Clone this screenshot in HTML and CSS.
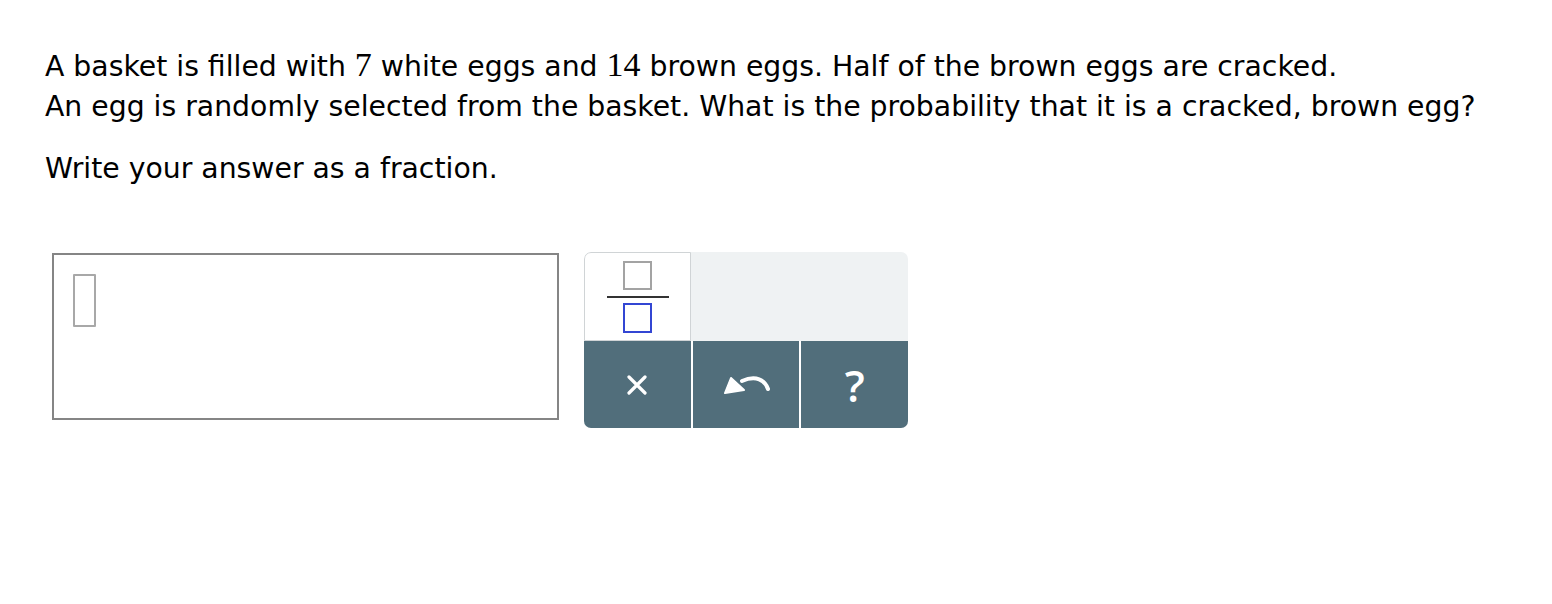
FILE: index.html
```html
<!DOCTYPE html>
<html lang="en">
<head>
<meta charset="utf-8">
<title>Probability question</title>
<link rel="stylesheet" href="styles.css">
</head>
<body>
<main class="page">
  <p class="question">A basket is filled with <span class="num">7</span> white eggs and <span class="num">14</span> brown eggs. Half of the brown eggs are cracked.<br>An egg is randomly selected from the basket. What is the probability that it is a cracked, brown egg?</p>
  <p class="instruction">Write your answer as a fraction.</p>
  <div class="answer-row">
    <div class="answer-box"><span class="cursor"></span></div>
    <div class="keypad">
      <div class="keys-top">
        <button class="key key-frac" aria-label="fraction">
          <svg width="64" height="74" viewBox="0 0 64 74">
            <rect x="18" y="2" width="27" height="27" fill="none" stroke="#a3a3a3" stroke-width="2"/>
            <rect x="1" y="36" width="62" height="2" fill="#333"/>
            <rect x="18" y="44" width="27" height="28" fill="none" stroke="#3346d3" stroke-width="2"/>
          </svg>
        </button>
      </div>
      <div class="keys-bottom">
        <button class="key key-dark" aria-label="clear">
          <svg width="20" height="20" viewBox="0 0 20 20"><path d="M2 2 L18 18 M18 2 L2 18" stroke="#fff" stroke-width="3.2" stroke-linecap="round"/></svg>
        </button>
        <button class="key key-dark" aria-label="undo">
          <svg width="52" height="26" viewBox="0 0 52 26">
            <path d="M48 17 C45 8 36 3 22 9" fill="none" stroke="#fff" stroke-width="4" stroke-linecap="round"/>
            <polygon points="5,21 11,6 24,18" fill="#fff" stroke="#fff" stroke-width="2" stroke-linejoin="round"/>
          </svg>
        </button>
        <button class="key key-dark key-help" aria-label="help">?</button>
      </div>
    </div>
  </div>
</main>
</body>
</html>
```

FILE: styles.css
```css
html, body {
  margin: 0;
  padding: 0;
  background: #fff;
}

.page {
  padding: 47px 0 0 45px;
  font-family: "DejaVu Sans", Verdana, sans-serif;
  color: #000;
}

.question {
  margin: 0;
  font-size: 28.3px;
  line-height: 40px;
}

.num {
  font-family: "Liberation Serif", "Times New Roman", serif;
  font-size: 34px;
  line-height: 20px;
}

.instruction {
  margin: 22px 0 0 0;
  font-size: 28.3px;
  line-height: 40px;
}

.answer-row {
  display: flex;
  align-items: flex-start;
  gap: 25px;
  margin: 63px 0 0 7px;
}

.answer-box {
  box-sizing: border-box;
  width: 507px;
  height: 167px;
  margin-top: 1px;
  border: 2px solid #858585;
  padding: 19px 0 0 19px;
}

.cursor {
  display: block;
  box-sizing: border-box;
  width: 23px;
  height: 53px;
  border: 2px solid #a8a8a8;
  border-radius: 1px;
}

.keypad {
  width: 324px;
  height: 176px;
  border-radius: 7px;
  overflow: hidden;
  display: flex;
  flex-direction: column;
  background: #eff2f3;
}

.keys-top {
  height: 89px;
  display: flex;
}

.key {
  border: 0;
  padding: 0;
  margin: 0;
  display: flex;
  align-items: center;
  justify-content: center;
  cursor: pointer;
}

.key-frac {
  box-sizing: border-box;
  width: 107px;
  height: 89px;
  background: #fff;
  border: 1px solid #d0d4d6;
  border-top-left-radius: 7px;
}

.keys-bottom {
  flex: 1;
  display: flex;
  gap: 2px;
  background: #fff;
}

.key-dark {
  flex: 1;
  background: #516e7b;
  color: #fff;
}

.key-help {
  font-family: "Open Sans", sans-serif;
  font-weight: 600;
  font-size: 44px;
  line-height: 1;
}
```
